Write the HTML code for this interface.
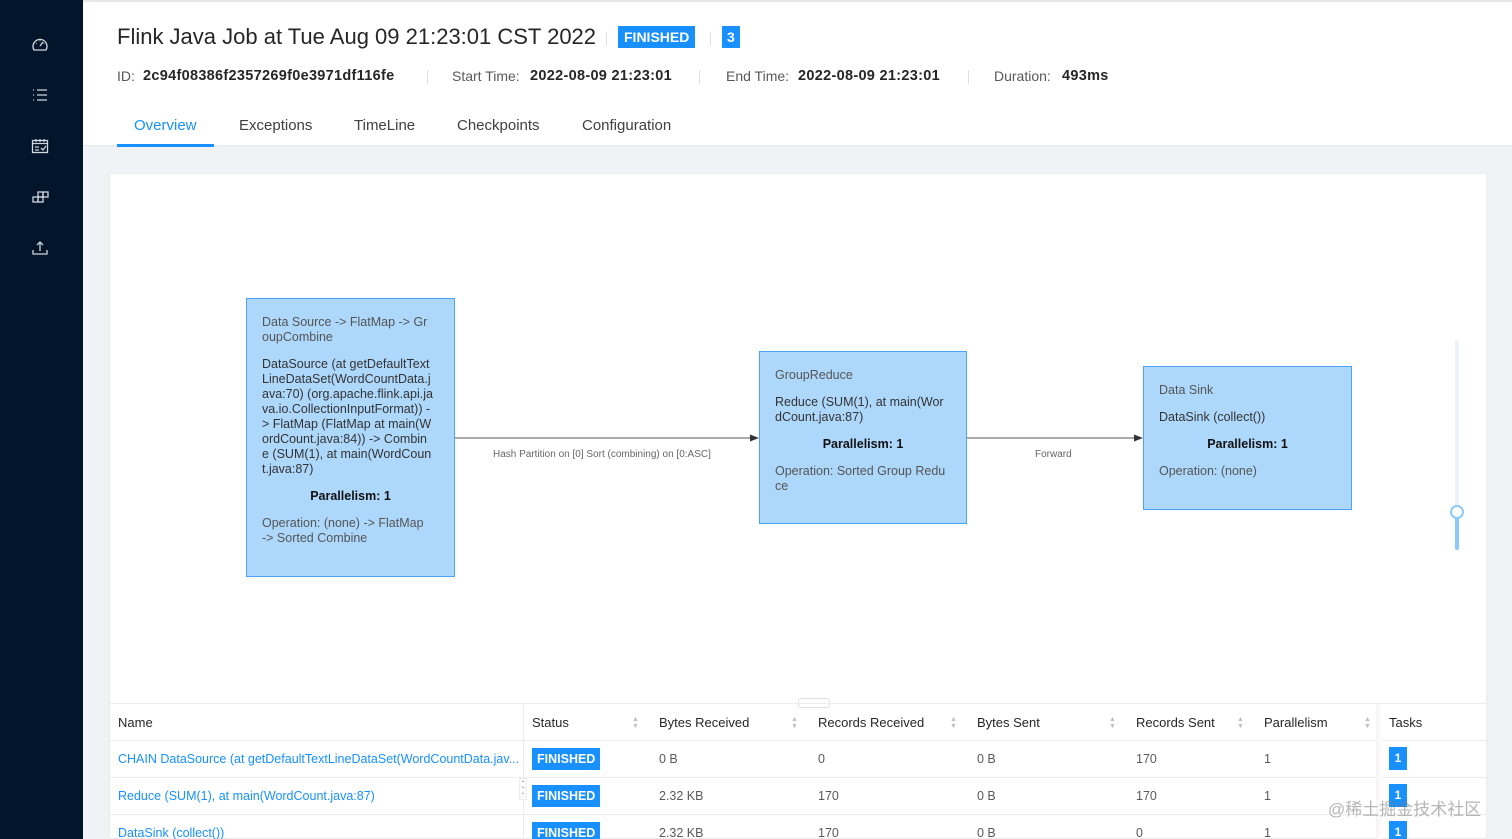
<!DOCTYPE html>
<html><head><meta charset="utf-8">
<style>
*{box-sizing:border-box;margin:0;padding:0}
html,body{width:1512px;height:839px;overflow:hidden}
body{background:#f0f2f5;font-family:"Liberation Sans",sans-serif;position:relative;color:#262626}
.abs{position:absolute;white-space:nowrap}
#side{left:0;top:0;width:83px;height:839px;background:#03152b}
#head{left:83px;top:2px;width:1429px;height:144px;background:#fff;border-bottom:1px solid #e8e8e8}
.vs{width:1px;height:14px;background:#e0e0e0;top:70px}
.tag{background:#1890ff;color:#fff;font-weight:bold;font-size:14px;padding:3px 6px}
.tab{font-size:15px;color:#404040;top:117px}
.m{top:68px;font-size:14px;color:#595959;line-height:17px}
.mv{top:68px;font-size:14.5px;font-weight:bold;color:#262626;letter-spacing:.3px;line-height:17px}
#card{left:109px;top:173px;width:1378px;height:666px;background:#fff;border:1px solid #ececec}
.node{background:#add8fc;border:1.5px solid #4ea2f2;font-size:12.5px;line-height:15px;color:#333;padding:16px 15px;white-space:normal}
.node p{margin-bottom:12px}
.node b{display:block;text-align:center;color:#111}
.node .t{color:#555}
.elbl{font-size:10px;color:#666}
.th{font-size:13px;color:#262626;top:715px}
.td{font-size:12.5px;color:#595959}
.lnk{color:#1890ff;font-size:12.5px}
.fin{background:#1890ff;color:#fff;font-weight:bold;font-size:12.5px;padding:3px 5px;line-height:16px}
.one{background:#1890ff;color:#fff;font-weight:bold;font-size:12px;width:18px;height:23px;text-align:center;line-height:23px}
.hl{height:1px;background:#ececec;left:110px;width:1376px}
.sort{width:8px;color:#bfbfbf;font-size:7px;line-height:7px}
</style></head><body>
<div class="abs" style="left:0;top:0;width:1512px;height:2px;background:#e8e8e8"></div>
<div id="side" class="abs">
<svg class="abs" style="left:31px;top:36px" width="18" height="18" viewBox="0 0 18 18" fill="none" stroke="#cfd6de" stroke-width="1.3"><path d="M3 14A7 7 0 1 1 15 14Z"/><path d="M9 10L12 6"/><path d="M5 7l.5.5M9 4.5v.8M13 7l-.5.5"/></svg>
<svg class="abs" style="left:32px;top:88px" width="16" height="14" viewBox="0 0 16 14" fill="none" stroke="#cfd6de" stroke-width="1.3"><path d="M1 2h1M1 7h1M1 12h1M5 2h10M5 7h10M5 12h10"/></svg>
<svg class="abs" style="left:31px;top:138px" width="18" height="16" viewBox="0 0 18 16" fill="none" stroke="#cfd6de" stroke-width="1.3"><rect x="1.5" y="2.5" width="15" height="12"/><path d="M5 1v3M9 1v3M13 1v3M1.5 5.5h15M4 9h4M4 12h4M10 10l2 2 3-4"/></svg>
<svg class="abs" style="left:31px;top:189px" width="18" height="16" viewBox="0 0 18 16" fill="none" stroke="#cfd6de" stroke-width="1.3"><rect x="2" y="8" width="5" height="5"/><rect x="7" y="8" width="5" height="5"/><rect x="7" y="3" width="5" height="5"/><rect x="12" y="3" width="5" height="5"/></svg>
<svg class="abs" style="left:31px;top:240px" width="18" height="16" viewBox="0 0 18 16" fill="none" stroke="#cfd6de" stroke-width="1.3"><path d="M9 2v9M6 5l3-3 3 3M2 10v4h14v-4"/></svg>
</div>
<div id="head" class="abs"></div>
<div class="abs" style="left:117px;top:24px;font-size:22px;color:#262626">Flink Java Job at Tue Aug 09 21:23:01 CST 2022</div>
<div class="abs vs" style="left:606px;top:32px"></div>
<div class="abs tag" style="left:618px;top:26px;padding:3px 6px">FINISHED</div>
<div class="abs vs" style="left:710px;top:32px"></div>
<div class="abs tag" style="left:722px;top:26px;padding:3px 5px">3</div>

<div class="abs m" style="left:117px">ID:</div>
<div class="abs mv" style="left:143px">2c94f08386f2357269f0e3971df116fe</div>
<div class="abs vs" style="left:427px"></div>
<div class="abs m" style="left:452px">Start Time:</div>
<div class="abs mv" style="left:530px">2022-08-09 21:23:01</div>
<div class="abs vs" style="left:699px"></div>
<div class="abs m" style="left:726px">End Time:</div>
<div class="abs mv" style="left:798px">2022-08-09 21:23:01</div>
<div class="abs vs" style="left:968px"></div>
<div class="abs m" style="left:994px">Duration:</div>
<div class="abs mv" style="left:1062px">493ms</div>

<div class="abs tab" style="left:134px;color:#1890ff">Overview</div>
<div class="abs" style="left:117px;top:144px;width:97px;height:3px;background:#1890ff"></div>
<div class="abs tab" style="left:239px">Exceptions</div>
<div class="abs tab" style="left:354px">TimeLine</div>
<div class="abs tab" style="left:457px">Checkpoints</div>
<div class="abs tab" style="left:582px">Configuration</div>

<div id="card" class="abs"></div>
<svg class="abs" style="left:0;top:0" width="1512" height="700">
<path d="M455 438H752" stroke="#777" stroke-width="1.2"/><path d="M759 438l-9-3.5v7z" fill="#333"/>
<path d="M967 438H1135" stroke="#777" stroke-width="1.2"/><path d="M1143 438l-9-3.5v7z" fill="#333"/>
<path d="M1457 340V550" stroke="#eef2f6" stroke-width="4"/>
<path d="M1457 518V548" stroke="#8cc8fa" stroke-width="4" stroke-linecap="round"/>
<circle cx="1457" cy="512" r="6" fill="#fff" stroke="#8cc8fa" stroke-width="2"/>
</svg>
<div class="abs elbl" style="left:493px;top:449px">Hash Partition on [0] Sort (combining) on [0:ASC]</div>
<div class="abs elbl" style="left:1035px;top:449px">Forward</div>

<div class="abs node" style="left:246px;top:298px;width:209px;height:279px">
<p class="t">Data Source -&gt; FlatMap -&gt; Gr<br>oupCombine</p>
<p>DataSource (at getDefaultText<br>LineDataSet(WordCountData.j<br>ava:70) (org.apache.flink.api.ja<br>va.io.CollectionInputFormat)) -<br>&gt; FlatMap (FlatMap at main(W<br>ordCount.java:84)) -&gt; Combin<br>e (SUM(1), at main(WordCoun<br>t.java:87)</p>
<p><b>Parallelism: 1</b></p>
<p class="t">Operation: (none) -&gt; FlatMap<br>-&gt; Sorted Combine</p>
</div>
<div class="abs node" style="left:759px;top:351px;width:208px;height:173px">
<p class="t">GroupReduce</p>
<p>Reduce (SUM(1), at main(Wor<br>dCount.java:87)</p>
<p><b>Parallelism: 1</b></p>
<p class="t">Operation: Sorted Group Redu<br>ce</p>
</div>
<div class="abs node" style="left:1143px;top:366px;width:209px;height:144px">
<p class="t">Data Sink</p>
<p>DataSink (collect())</p>
<p><b>Parallelism: 1</b></p>
<p class="t">Operation: (none)</p>
</div>

<div class="abs" style="left:798px;top:698px;width:32px;height:10px;background:#fff;border:1px solid #e0e0e0;border-radius:3px;font-size:9px;line-height:4px;text-align:center;color:#666">...</div>
<div class="abs hl" style="top:703px"></div>
<div class="abs hl" style="top:740px"></div>
<div class="abs hl" style="top:777px"></div>
<div class="abs hl" style="top:814px"></div>
<div class="abs" style="left:523px;top:704px;width:1px;height:135px;background:#ececec"></div>
<div class="abs" style="left:1376px;top:704px;width:6px;height:135px;background:linear-gradient(90deg,#f4f4f4,#fff)"></div>
<div class="abs" style="left:519px;top:778px;width:8px;height:22px;background:#fafafa;border:1px solid #eee;font-size:10px;line-height:6px;text-align:center;color:#555">·<br>·<br>·</div>

<div class="abs th" style="left:118px">Name</div>
<div class="abs th" style="left:532px">Status</div>
<div class="abs th" style="left:659px">Bytes Received</div>
<div class="abs th" style="left:818px">Records Received</div>
<div class="abs th" style="left:977px">Bytes Sent</div>
<div class="abs th" style="left:1136px">Records Sent</div>
<div class="abs th" style="left:1264px">Parallelism</div>
<div class="abs th" style="left:1389px">Tasks</div>
<div class="abs sort" style="left:632px;top:716px">▲<br>▼</div>
<div class="abs sort" style="left:791px;top:716px">▲<br>▼</div>
<div class="abs sort" style="left:950px;top:716px">▲<br>▼</div>
<div class="abs sort" style="left:1109px;top:716px">▲<br>▼</div>
<div class="abs sort" style="left:1237px;top:716px">▲<br>▼</div>
<div class="abs sort" style="left:1364px;top:716px">▲<br>▼</div>

<div class="abs lnk" style="left:118px;top:752px">CHAIN DataSource (at getDefaultTextLineDataSet(WordCountData.jav...</div>
<div class="abs fin" style="left:532px;top:748px">FINISHED</div>
<div class="abs td" style="left:659px;top:752px">0 B</div>
<div class="abs td" style="left:818px;top:752px">0</div>
<div class="abs td" style="left:977px;top:752px">0 B</div>
<div class="abs td" style="left:1136px;top:752px">170</div>
<div class="abs td" style="left:1264px;top:752px">1</div>
<div class="abs one" style="left:1389px;top:747px">1</div>

<div class="abs lnk" style="left:118px;top:789px">Reduce (SUM(1), at main(WordCount.java:87)</div>
<div class="abs fin" style="left:532px;top:785px">FINISHED</div>
<div class="abs td" style="left:659px;top:789px">2.32 KB</div>
<div class="abs td" style="left:818px;top:789px">170</div>
<div class="abs td" style="left:977px;top:789px">0 B</div>
<div class="abs td" style="left:1136px;top:789px">170</div>
<div class="abs td" style="left:1264px;top:789px">1</div>
<div class="abs one" style="left:1389px;top:784px">1</div>

<div class="abs lnk" style="left:118px;top:826px">DataSink (collect())</div>
<div class="abs fin" style="left:532px;top:822px">FINISHED</div>
<div class="abs td" style="left:659px;top:826px">2.32 KB</div>
<div class="abs td" style="left:818px;top:826px">170</div>
<div class="abs td" style="left:977px;top:826px">0 B</div>
<div class="abs td" style="left:1136px;top:826px">0</div>
<div class="abs td" style="left:1264px;top:826px">1</div>
<div class="abs one" style="left:1389px;top:821px">1</div>
<div class="abs" style="left:1328px;top:795px;font-size:17px;color:rgba(120,120,120,.55);font-family:'Liberation Sans','Noto Sans CJK SC',sans-serif">@稀土掘金技术社区</div>
</body></html>
